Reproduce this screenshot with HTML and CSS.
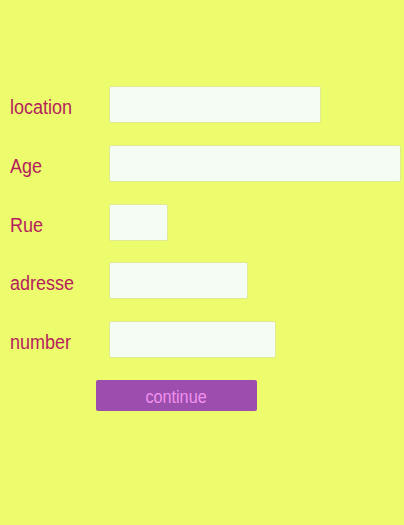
FILE: index.html
```html
<!DOCTYPE html>
<html lang="fr">
<head>
<meta charset="utf-8">
<title>Form</title>
<link rel="stylesheet" href="styles.css">
</head>
<body>
<form class="form">
  <label class="label" for="f-location"><span>location</span></label>
  <input class="field w-location" id="f-location" type="text">
  <label class="label" for="f-age"><span>Age</span></label>
  <input class="field w-age" id="f-age" type="text">
  <label class="label" for="f-rue"><span>Rue</span></label>
  <input class="field w-rue" id="f-rue" type="text">
  <label class="label" for="f-adresse"><span>adresse</span></label>
  <input class="field w-adresse" id="f-adresse" type="text">
  <label class="label" for="f-number"><span>number</span></label>
  <input class="field w-number" id="f-number" type="text">
  <div class="actions"><button class="btn" type="button"><span>continue</span></button></div>
</form>
</body>
</html>
```
FILE: styles.css
```css
html, body {
  margin: 0;
  padding: 0;
  background: #edfc6d;
  height: 100%;
}
body {
  font-family: "Liberation Sans", Arial, sans-serif;
}
.form {
  display: grid;
  grid-template-columns: 99px auto;
  justify-content: start;
  justify-items: start;
  row-gap: 21.75px;
  padding: 86px 0 0 10px;
}
.label {
  height: 37px;
  line-height: 37px;
  padding-top: 3px;
  box-sizing: border-box;
  font-size: 20px;
  color: #b4225c;
  white-space: nowrap;
}
.label span {
  display: inline-block;
  transform: scaleX(0.9);
  transform-origin: left center;
}
.field {
  box-sizing: border-box;
  height: 37px;
  margin: 0;
  padding: 0 6px;
  border: 1px solid #dfea93;
  border-radius: 2px;
  background: #f4fcf3;
  outline: none;
}
.w-location { width: 212px; }
.w-age { width: 292px; }
.w-rue { width: 59px; }
.w-adresse { width: 139px; }
.w-number { width: 167px; }
.actions {
  grid-column: 1 / -1;
  padding-left: 86px;
}
.btn {
  width: 161px;
  height: 31px;
  margin: 0;
  padding: 5px 0 0;
  border: none;
  border-radius: 2px;
  background: #9b4ead;
  color: #f291ee;
  font-family: "Liberation Sans", Arial, sans-serif;
  font-size: 18px;
  cursor: pointer;
}
.btn span {
  display: inline-block;
  transform: scaleX(0.9);
}
```
